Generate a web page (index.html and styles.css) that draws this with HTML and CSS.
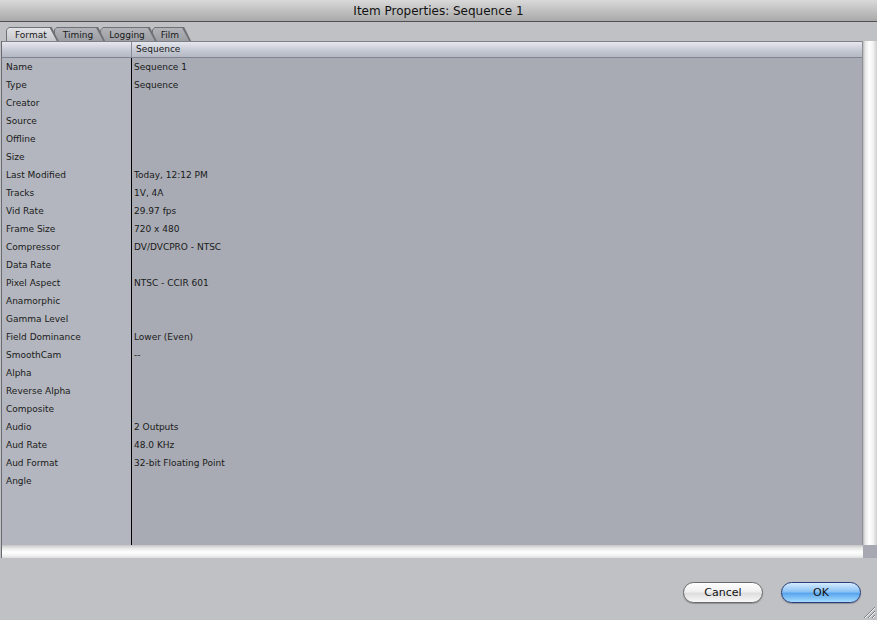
FILE: index.html
```html
<!DOCTYPE html>
<html lang="en">
<head>
    <meta charset="UTF-8">
    <title>Item Properties: Sequence 1</title>
    <link rel="stylesheet" href="styles.css">
</head>
<body>
    <div class="window">
        <div class="titlebar">Item Properties: Sequence 1</div>

        <!-- Tab strip -->
        <div class="tabs">
            <div class="tab active"><span>Format</span></div>
            <div class="tab t2"><span>Timing</span></div>
            <div class="tab t3"><span>Logging</span></div>
            <div class="tab t4"><span>Film</span></div>
        </div>

        <!-- Properties sheet -->
        <div class="sheet">
            <div class="table">
                <div class="head">
                    <div class="head-cell"></div>
                    <div class="head-cell">Sequence</div>
                </div>
                <div class="body">
                    <div class="col labels">
                        <div class="cell">Name</div>
                        <div class="cell">Type</div>
                        <div class="cell">Creator</div>
                        <div class="cell">Source</div>
                        <div class="cell">Offline</div>
                        <div class="cell">Size</div>
                        <div class="cell">Last Modified</div>
                        <div class="cell">Tracks</div>
                        <div class="cell">Vid Rate</div>
                        <div class="cell">Frame Size</div>
                        <div class="cell">Compressor</div>
                        <div class="cell">Data Rate</div>
                        <div class="cell">Pixel Aspect</div>
                        <div class="cell">Anamorphic</div>
                        <div class="cell">Gamma Level</div>
                        <div class="cell">Field Dominance</div>
                        <div class="cell">SmoothCam</div>
                        <div class="cell">Alpha</div>
                        <div class="cell">Reverse Alpha</div>
                        <div class="cell">Composite</div>
                        <div class="cell">Audio</div>
                        <div class="cell">Aud Rate</div>
                        <div class="cell">Aud Format</div>
                        <div class="cell">Angle</div>
                    </div>
                    <div class="col values">
                        <div class="cell">Sequence 1</div>
                        <div class="cell">Sequence</div>
                        <div class="cell"></div>
                        <div class="cell"></div>
                        <div class="cell"></div>
                        <div class="cell"></div>
                        <div class="cell">Today, 12:12 PM</div>
                        <div class="cell">1V, 4A</div>
                        <div class="cell">29.97 fps</div>
                        <div class="cell">720 x 480</div>
                        <div class="cell">DV/DVCPRO - NTSC</div>
                        <div class="cell"></div>
                        <div class="cell">NTSC - CCIR 601</div>
                        <div class="cell"></div>
                        <div class="cell"></div>
                        <div class="cell">Lower (Even)</div>
                        <div class="cell">--</div>
                        <div class="cell"></div>
                        <div class="cell"></div>
                        <div class="cell"></div>
                        <div class="cell">2 Outputs</div>
                        <div class="cell">48.0 KHz</div>
                        <div class="cell">32-bit Floating Point</div>
                        <div class="cell"></div>
                    </div>
                </div>
            </div>
            <div class="vscroll"></div>
            <div class="hscroll"></div>
            <div class="corner"></div>
        </div>

        <div class="footer">
            <button class="btn">Cancel</button>
            <button class="btn default">OK</button>
            <svg class="grip" width="13" height="13" viewBox="0 0 13 13">
                <path d="M1 12 L12 1 M5 12 L12 5 M9 12 L12 9" stroke="#7d7f84" stroke-width="1"/>
                <path d="M2 12 L12 2 M6 12 L12 6 M10 12 L12 10" stroke="#f4f4f4" stroke-width="1"/>
            </svg>
        </div>
    </div>
</body>
</html>
```
FILE: styles.css
```css
body {
    margin: 0;
    font-family: 'DejaVu Sans', sans-serif;
    background-color: #c0c1c5;
    color: #1a1a1a;
}
.window {
    width: 877px;
    height: 620px;
    display: flex;
    flex-direction: column;
    position: relative;
}
.titlebar {
    height: 21px;
    line-height: 22px;
    border-bottom: 1px solid #505050;
    background: linear-gradient(#d9d9d9, #a9a9a9);
    text-align: center;
    font-size: 12px;
    color: #111;
}
.tabs {
    display: flex;
    height: 14px;
    margin-top: 5px;
    padding-left: 6px;
}
.tab {
    position: relative;
    height: 14px;
    padding: 1px 1px 0;
    margin-right: -5px;
    background: #6f7176;
    clip-path: polygon(0 100%, 0 3px, 3px 0, calc(100% - 7px) 0, 100% 100%);
    box-sizing: border-box;
}
.tab span {
    display: block;
    height: 13px;
    line-height: 14px;
    font-size: 9px;
    padding: 0 11px 0 8px;
    background: linear-gradient(#b1b3b9, #9c9ea4);
    clip-path: polygon(0 100%, 0 2px, 2px 0, calc(100% - 8px) 0, calc(100% - 1px) 100%);
}
.tab.active { z-index: 4; }
.tab.active span {
    background: linear-gradient(#e2e3e6, #c6c7cb);
}
.t2 { z-index: 3; }
.t3 { z-index: 2; }
.t4 { z-index: 1; }
.sheet {
    margin-left: 1px;
    height: 517px;
    display: grid;
    grid-template-columns: 1fr 14px;
    grid-template-rows: 1fr 13px;
    border-left: 1px solid #6a6c71;
}
.table {
    display: flex;
    flex-direction: column;
    border-right: 1px solid #8d9096;
}
.head {
    display: grid;
    grid-template-columns: 129px 1fr;
    height: 17px;
    box-sizing: border-box;
    border-top: 1px solid #7d8088;
    border-bottom: 1px solid #80848e;
    background: linear-gradient(#e6e8ee, #c3c7d1 60%, #b3b8c4);
}
.head-cell {
    font-size: 9px;
    line-height: 15px;
    padding-left: 4px;
}
.head-cell + .head-cell {
    border-left: 1px solid #8a8d95;
}
.body {
    flex: 1;
    display: grid;
    grid-template-columns: 129px 1fr;
}
.col.labels {
    background-color: #b3b6be;
    padding-left: 4px;
}
.col.values {
    background-color: #a8abb3;
    border-left: 1px solid #000;
    padding-left: 2px;
}
.cell {
    height: 18px;
    line-height: 18px;
    font-size: 9px;
    white-space: nowrap;
}
.vscroll {
    background: linear-gradient(90deg, #b8b8b8, #e6e6e6 15%, #ffffff 45%, #f4f4f4 70%, #cfcfcf);
}
.hscroll {
    background: linear-gradient(#c5c5c5, #e8e8e8 25%, #ffffff 55%, #f2f2f2 80%, #dcdcdc);
}
.corner {
    background-color: #a6a9b1;
}
.footer {
    flex: 1;
    display: flex;
    justify-content: flex-end;
    align-items: flex-start;
    gap: 18px;
    padding: 24px 16px 0 0;
}
.btn {
    width: 80px;
    height: 21px;
    border-radius: 11px;
    font-family: 'DejaVu Sans', sans-serif;
    font-size: 11px;
    color: #111;
    padding: 0;
    border: 1px solid #6b6b6b;
    background: linear-gradient(#ffffff, #f0f0f0 45%, #dedede 55%, #f8f8f8);
    box-shadow: 0 1px 1px rgba(0, 0, 0, 0.25);
}
.btn.default {
    border-color: #2a3d7a;
    background: linear-gradient(#d6ebff, #8cc3f5 45%, #5aa6ee 55%, #a6dcff);
}
.grip {
    position: absolute;
    right: 1px;
    bottom: 1px;
}
```
